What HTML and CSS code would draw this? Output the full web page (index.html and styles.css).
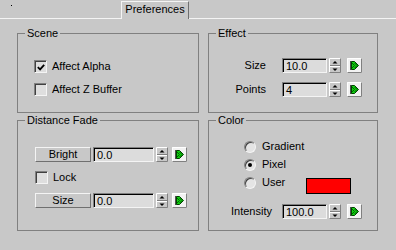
FILE: index.html
```html
<!DOCTYPE html>
<html>
<head>
<meta charset="utf-8">
<link rel="stylesheet" href="styles.css">
</head>
<body>
<div class="tabbar">
  <span class="dot"></span>
  <div class="tab">Preferences</div>
</div>
<div class="panel">
  <div class="group">
    <div class="legend">Scene</div>
    <div class="scene-body">
      <label class="row"><span class="check on"><svg width="11" height="11" viewBox="0 0 11 11"><path d="M2 5 L4.5 7.5 L9 2.5" fill="none" stroke="#000" stroke-width="2"/></svg></span><span class="ctext">Affect Alpha</span></label>
      <label class="row"><span class="check"></span><span class="ctext">Affect Z Buffer</span></label>
    </div>
  </div>
  <div class="group">
    <div class="legend">Effect</div>
    <div class="effect-body">
      <div class="row">
        <span class="rlabel">Size</span>
        <span class="edit w45">10.0</span>
        <span class="spin"><svg width="12" height="15" viewBox="0 0 12 15"><path d="M0.5 14.5V0.5H11.5" fill="none" stroke="#fff"/><path d="M11.5 0.5V14.5H0.5" fill="none" stroke="#808080"/><path d="M1 7.5H11" stroke="#808080"/><path d="M1 8.5H11" stroke="#fff"/><path d="M3.5 5.5H8.5L6 3Z" fill="#000"/><path d="M3.5 10.5H8.5L6 13Z" fill="#000"/></svg></span>
        <span class="key"><svg width="15" height="15" viewBox="0 0 15 15"><rect width="15" height="15" fill="#f2f2f2"/><path d="M0.5 14.5V0.5H14.5" fill="none" stroke="#fff"/><path d="M14.5 0.5V14.5H0.5" fill="none" stroke="#808080"/><rect x="3" y="3" width="1.5" height="9" fill="#505050"/><path d="M4.5 3.5H7.5L11.5 7.5L7.5 11.5H4.5Z" fill="#10d010" stroke="#004000"/><path d="M5 5L7.5 7.5L5 10" fill="none" stroke="#006000"/><path d="M7.5 5L10 7.5L7.5 10" fill="none" stroke="#006000"/></svg></span>
      </div>
      <div class="row">
        <span class="rlabel">Points</span>
        <span class="edit w45">4</span>
        <span class="spin"><svg width="12" height="15" viewBox="0 0 12 15"><path d="M0.5 14.5V0.5H11.5" fill="none" stroke="#fff"/><path d="M11.5 0.5V14.5H0.5" fill="none" stroke="#808080"/><path d="M1 7.5H11" stroke="#808080"/><path d="M1 8.5H11" stroke="#fff"/><path d="M3.5 5.5H8.5L6 3Z" fill="#000"/><path d="M3.5 10.5H8.5L6 13Z" fill="#000"/></svg></span>
        <span class="key"><svg width="15" height="15" viewBox="0 0 15 15"><rect width="15" height="15" fill="#f2f2f2"/><path d="M0.5 14.5V0.5H14.5" fill="none" stroke="#fff"/><path d="M14.5 0.5V14.5H0.5" fill="none" stroke="#808080"/><rect x="3" y="3" width="1.5" height="9" fill="#505050"/><path d="M4.5 3.5H7.5L11.5 7.5L7.5 11.5H4.5Z" fill="#10d010" stroke="#004000"/><path d="M5 5L7.5 7.5L5 10" fill="none" stroke="#006000"/><path d="M7.5 5L10 7.5L7.5 10" fill="none" stroke="#006000"/></svg></span>
      </div>
    </div>
  </div>
  <div class="group">
    <div class="legend">Distance Fade</div>
    <div class="fade-body">
      <div class="row">
        <span class="btn">Bright</span>
        <span class="edit w61">0.0</span>
        <span class="spin"><svg width="12" height="15" viewBox="0 0 12 15"><path d="M0.5 14.5V0.5H11.5" fill="none" stroke="#fff"/><path d="M11.5 0.5V14.5H0.5" fill="none" stroke="#808080"/><path d="M1 7.5H11" stroke="#808080"/><path d="M1 8.5H11" stroke="#fff"/><path d="M3.5 5.5H8.5L6 3Z" fill="#000"/><path d="M3.5 10.5H8.5L6 13Z" fill="#000"/></svg></span>
        <span class="key k2"><svg width="15" height="15" viewBox="0 0 15 15"><rect width="15" height="15" fill="#f2f2f2"/><path d="M0.5 14.5V0.5H14.5" fill="none" stroke="#fff"/><path d="M14.5 0.5V14.5H0.5" fill="none" stroke="#808080"/><rect x="3" y="3" width="1.5" height="9" fill="#505050"/><path d="M4.5 3.5H7.5L11.5 7.5L7.5 11.5H4.5Z" fill="#10d010" stroke="#004000"/><path d="M5 5L7.5 7.5L5 10" fill="none" stroke="#006000"/><path d="M7.5 5L10 7.5L7.5 10" fill="none" stroke="#006000"/></svg></span>
      </div>
      <label class="row"><span class="check"></span><span class="ctext">Lock</span></label>
      <div class="row">
        <span class="btn">Size</span>
        <span class="edit w61">0.0</span>
        <span class="spin"><svg width="12" height="15" viewBox="0 0 12 15"><path d="M0.5 14.5V0.5H11.5" fill="none" stroke="#fff"/><path d="M11.5 0.5V14.5H0.5" fill="none" stroke="#808080"/><path d="M1 7.5H11" stroke="#808080"/><path d="M1 8.5H11" stroke="#fff"/><path d="M3.5 5.5H8.5L6 3Z" fill="#000"/><path d="M3.5 10.5H8.5L6 13Z" fill="#000"/></svg></span>
        <span class="key k2"><svg width="15" height="15" viewBox="0 0 15 15"><rect width="15" height="15" fill="#f2f2f2"/><path d="M0.5 14.5V0.5H14.5" fill="none" stroke="#fff"/><path d="M14.5 0.5V14.5H0.5" fill="none" stroke="#808080"/><rect x="3" y="3" width="1.5" height="9" fill="#505050"/><path d="M4.5 3.5H7.5L11.5 7.5L7.5 11.5H4.5Z" fill="#10d010" stroke="#004000"/><path d="M5 5L7.5 7.5L5 10" fill="none" stroke="#006000"/><path d="M7.5 5L10 7.5L7.5 10" fill="none" stroke="#006000"/></svg></span>
      </div>
    </div>
  </div>
  <div class="group">
    <div class="legend">Color</div>
    <div class="color-body">
      <label class="row radio-row"><span class="radio"></span><span class="rtext">Gradient</span></label>
      <label class="row radio-row"><span class="radio on"></span><span class="rtext">Pixel</span></label>
      <label class="row radio-row user"><span class="radio"></span><span class="rtext">User</span><span class="swatch"></span></label>
      <div class="row intensity">
        <span class="ilabel">Intensity</span>
        <span class="edit w45">100.0</span>
        <span class="spin"><svg width="12" height="15" viewBox="0 0 12 15"><path d="M0.5 14.5V0.5H11.5" fill="none" stroke="#fff"/><path d="M11.5 0.5V14.5H0.5" fill="none" stroke="#808080"/><path d="M1 7.5H11" stroke="#808080"/><path d="M1 8.5H11" stroke="#fff"/><path d="M3.5 5.5H8.5L6 3Z" fill="#000"/><path d="M3.5 10.5H8.5L6 13Z" fill="#000"/></svg></span>
        <span class="key"><svg width="15" height="15" viewBox="0 0 15 15"><rect width="15" height="15" fill="#f2f2f2"/><path d="M0.5 14.5V0.5H14.5" fill="none" stroke="#fff"/><path d="M14.5 0.5V14.5H0.5" fill="none" stroke="#808080"/><rect x="3" y="3" width="1.5" height="9" fill="#505050"/><path d="M4.5 3.5H7.5L11.5 7.5L7.5 11.5H4.5Z" fill="#10d010" stroke="#004000"/><path d="M5 5L7.5 7.5L5 10" fill="none" stroke="#006000"/><path d="M7.5 5L10 7.5L7.5 10" fill="none" stroke="#006000"/></svg></span>
      </div>
    </div>
  </div>
</div>
</body>
</html>
```
FILE: styles.css
```css
html, body {
  margin: 0;
  padding: 0;
}
body {
  width: 396px;
  height: 250px;
  overflow: hidden;
  background: #c8c8c8;
  color: #000;
  font-family: "Liberation Sans", Arial, sans-serif;
  font-size: 11px;
  line-height: 13px;
}
.tabbar {
  height: 18px;
  border-bottom: 1px solid #f4f4f4;
  display: flex;
  align-items: flex-end;
}
.dot {
  align-self: flex-start;
  width: 1px;
  height: 1px;
  margin: 5px 0 0 11px;
  background: #000;
}
.tab {
  margin-left: 109px;
  margin-bottom: -1px;
  height: 17px;
  width: 66px;
  box-sizing: content-box;
  border-top: 1px solid #f4f4f4;
  border-left: 1px solid #f4f4f4;
  border-right: 1px solid #707070;
  background: #c8c8c8;
  text-align: center;
  line-height: 15px;
}
.panel {
  display: grid;
  grid-template-columns: 182px 170px;
  grid-template-rows: 80px 111px;
  column-gap: 9px;
  row-gap: 7px;
  padding: 14px 0 0 17px;
}
.group {
  border: 1px solid #808080;
  box-sizing: border-box;
}
.legend {
  margin: -7px 0 0 7px;
  padding: 0 2px;
  width: fit-content;
  background: #c8c8c8;
  line-height: 12px;
  height: 12px;
}
.row {
  display: flex;
  align-items: center;
  height: 15px;
}
.scene-body {
  padding: 20px 0 0 16px;
  display: flex;
  flex-direction: column;
  gap: 8px;
}
.check {
  width: 13px;
  height: 13px;
  box-sizing: border-box;
  border: 1px solid;
  border-color: #808080 #f4f4f4 #f4f4f4 #808080;
  box-shadow: inset 1px 1px 0 #404040;
  background: #dedede;
  display: flex;
  align-items: center;
  justify-content: center;
  flex: none;
}
.check svg {
  display: block;
  margin: 1px 0 0 1px;
}
.ctext {
  margin-left: 5px;
}
.effect-body {
  padding: 19px 0 0 0;
  display: flex;
  flex-direction: column;
  gap: 9px;
}
.rlabel {
  width: 57px;
  text-align: right;
  margin-right: 16px;
}
.edit {
  height: 15px;
  box-sizing: border-box;
  border: 1px solid;
  border-color: #808080 #f4f4f4 #f4f4f4 #808080;
  box-shadow: inset 1px 1px 0 #000;
  background: #dcdcdc;
  padding: 1px 0 0 3px;
  line-height: 12px;
  flex: none;
}
.w45 { width: 45px; }
.w61 { width: 61px; }
.spin {
  margin-left: 2px;
  width: 12px;
  height: 15px;
  flex: none;
}
.spin svg, .key svg {
  display: block;
}
.key {
  margin-left: 6px;
  width: 15px;
  height: 15px;
  flex: none;
}
.key.k2 {
  margin-left: 4px;
}
.fade-body {
  padding: 21px 0 0 17px;
  display: flex;
  flex-direction: column;
  gap: 8px;
}
.btn {
  width: 56px;
  height: 15px;
  box-sizing: border-box;
  border: 1px solid;
  border-color: #f4f4f4 #707070 #707070 #f4f4f4;
  background: #c8c8c8;
  text-align: center;
  line-height: 13px;
  margin-right: 2px;
  flex: none;
}
.color-body {
  padding: 13px 0 0 35px;
  display: flex;
  flex-direction: column;
  gap: 3px;
}
.radio {
  width: 12px;
  height: 12px;
  box-sizing: border-box;
  border-radius: 50%;
  border: 1px solid;
  border-color: #808080 #f4f4f4 #f4f4f4 #808080;
  box-shadow: inset 1px 1px 0 #404040;
  background: #e4e4e4;
  display: flex;
  align-items: center;
  justify-content: center;
  flex: none;
}
.radio.on::after {
  content: "";
  width: 4px;
  height: 4px;
  border-radius: 50%;
  background: #000;
}
.rtext {
  margin-left: 6px;
  width: 44px;
}
.user {
  align-items: flex-start;
  height: 19px;
}
.user .radio {
  margin-top: 2px;
}
.user .rtext {
  margin-top: 1px;
}
.swatch {
  margin-top: 3px;
  width: 45px;
  height: 16px;
  box-sizing: border-box;
  border: 1px solid #000;
  background: #ff0000;
}
.intensity {
  margin: 7px 0 0 -13px;
}
.ilabel {
  width: 51px;
}
```
